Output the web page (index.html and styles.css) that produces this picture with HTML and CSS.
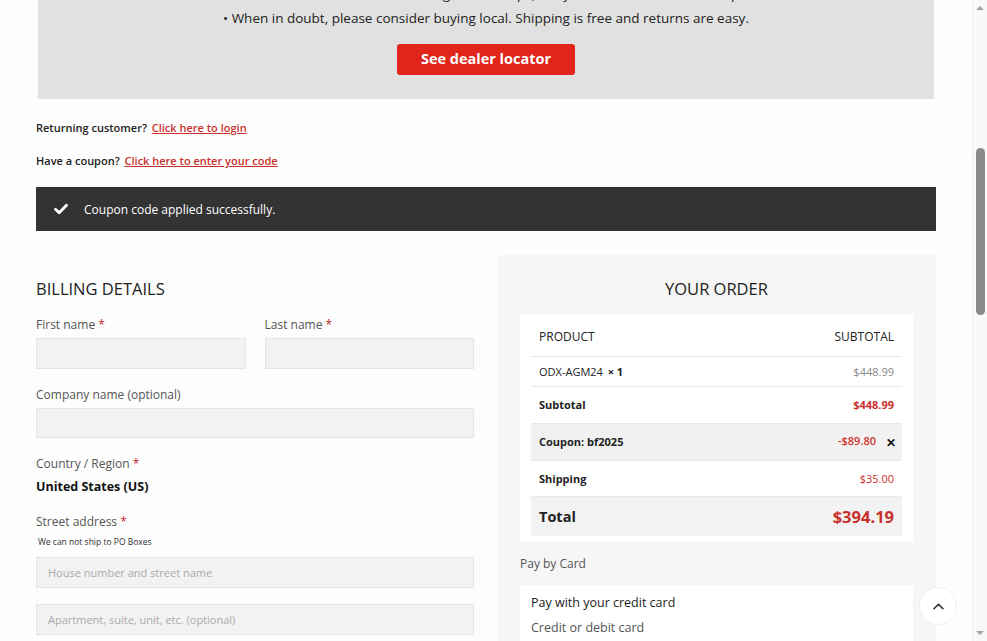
FILE: index.html
```html
<!DOCTYPE html>
<html lang="en">
<head>
<meta charset="utf-8">
<title>Checkout</title>
<link rel="stylesheet" href="styles.css">
</head>
<body>
<div class="viewport">
  <main class="page">
    <section class="dealer-banner">
      <p class="banner-line">• Our batteries are also sold through local shops, ask your nearest dealer for help.</p>
      <p class="banner-line banner-main">• When in doubt, please consider buying local. Shipping is free and returns are easy.</p>
      <a class="dealer-btn" href="#">See dealer locator</a>
    </section>

    <p class="notice">Returning customer? <a href="#">Click here to login</a></p>
    <p class="notice notice-coupon">Have a coupon? <a href="#">Click here to enter your code</a></p>

    <div class="message">
      <svg class="message-icon" viewBox="0 0 14 12" width="14" height="12" aria-hidden="true">
        <path d="M1.5 6.3 L5.2 9.8 L12.5 2.2" fill="none" stroke="#fff" stroke-width="2.8" stroke-linecap="round" stroke-linejoin="round"/>
      </svg>
      <span>Coupon code applied successfully.</span>
    </div>

    <div class="checkout">
      <form class="billing">
        <h3 class="section-title">BILLING DETAILS</h3>
        <div class="field-row">
          <div class="field">
            <label>First name <abbr>*</abbr></label>
            <input class="input" type="text">
          </div>
          <div class="field">
            <label>Last name <abbr>*</abbr></label>
            <input class="input" type="text">
          </div>
        </div>
        <div class="field">
          <label>Company name (optional)</label>
          <input class="input input-short" type="text">
        </div>
        <div class="field">
          <label>Country / Region <abbr>*</abbr></label>
          <strong class="country">United States (US)</strong>
        </div>
        <div class="field">
          <label>Street address <abbr>*</abbr></label>
          <span class="hint">We can not ship to PO Boxes</span>
          <input class="input input-street" type="text" placeholder="House number and street name">
          <input class="input input-apt" type="text" placeholder="Apartment, suite, unit, etc. (optional)">
        </div>
      </form>

      <aside class="order">
        <h3 class="section-title order-title">YOUR ORDER</h3>
        <div class="order-card">
          <table class="order-table">
            <thead>
              <tr class="row-head"><th>PRODUCT</th><th class="num">SUBTOTAL</th></tr>
            </thead>
            <tbody>
              <tr class="row-item"><td>ODX-AGM24 <strong class="qty">× 1</strong></td><td class="num muted">$448.99</td></tr>
            </tbody>
            <tfoot>
              <tr class="row-sub"><th>Subtotal</th><td class="num red">$448.99</td></tr>
              <tr class="row-coupon"><th>Coupon: bf2025</th><td class="num"><span class="red-light">-$89.80</span><span class="remove">✕</span></td></tr>
              <tr class="row-ship"><th>Shipping</th><td class="num red red-normal">$35.00</td></tr>
              <tr class="row-total"><th>Total</th><td class="num red">$394.19</td></tr>
            </tfoot>
          </table>
        </div>
        <p class="pay-title">Pay by Card</p>
        <div class="pay-card">
          <p class="pay-head">Pay with your credit card</p>
          <p class="pay-sub">Credit or debit card</p>
        </div>
      </aside>
    </div>
  </main>

  <div class="scrollbar" aria-hidden="true">
    <span class="scroll-arrow up"></span>
    <div class="scroll-track"><span class="scroll-thumb"></span></div>
    <span class="scroll-arrow down"></span>
  </div>
</div>

<a class="to-top" href="#" aria-label="Back to top">
  <svg viewBox="0 0 14 10" width="13" height="9" aria-hidden="true">
    <path d="M2 7.5 L7 2.5 L12 7.5" fill="none" stroke="#333" stroke-width="1.8" stroke-linecap="round" stroke-linejoin="round"/>
  </svg>
</a>
</body>
</html>
```

FILE: styles.css
```css
* { box-sizing: border-box; }

html, body {
  margin: 0;
  height: 641px;
  overflow: hidden;
}

body {
  font-family: "Open Sans", "Liberation Sans", sans-serif;
  color: #222;
  background: #fdfdfd;
}

p { margin: 0; }

.viewport {
  display: flex;
  height: 641px;
}

.page {
  flex: 1;
  padding: 0 36px;
  min-width: 0;
}

/* dealer banner */
.dealer-banner {
  margin: -17px 2px 0;
  background: #e1e1e1;
  text-align: center;
  padding-bottom: 24px;
}
.banner-line {
  font-size: 13.5px;
  line-height: 22px;
  color: #222;
}
.banner-main { margin-top: 2px; }
.dealer-btn {
  display: inline-block;
  margin-top: 15px;
  width: 178px;
  height: 31px;
  line-height: 30px;
  background: #e1251b;
  color: #fff;
  border-radius: 3px;
  font-weight: 700;
  font-size: 14.5px;
  text-decoration: none;
}

/* notices */
.notice {
  margin-top: 19px;
  font-size: 11px;
  line-height: 20px;
  font-weight: 600;
  color: #222;
}
.notice a {
  color: #c9302c;
  margin-left: 2px;
}
.notice-coupon { margin-top: 13px; }

.message {
  margin-top: 16px;
  height: 44px;
  background: #333;
  color: #fff;
  display: flex;
  align-items: center;
  padding-left: 18px;
  font-size: 12px;
}
.message-icon { margin-right: 16px; }

/* two columns */
.checkout {
  margin-top: 24px;
  display: grid;
  grid-template-columns: 1fr 1fr;
  column-gap: 24px;
  align-items: start;
}

.section-title {
  margin: 0;
  font-weight: 400;
  font-size: 16.5px;
  line-height: 24px;
  color: #222;
}

.billing { padding-top: 22px; }

.field-row {
  display: grid;
  grid-template-columns: 1fr 1fr;
  column-gap: 19px;
}
.field {
  display: flex;
  flex-direction: column;
}
.billing > .field { margin-top: 17px; }
.field-row .field { margin-top: 15px; }

.field label {
  font-size: 12px;
  line-height: 18px;
  color: #555;
}
.field abbr {
  color: #c0282d;
  text-decoration: none;
}

.input {
  margin-top: 4px;
  height: 31px;
  border: 1px solid #e4e4e4;
  background: #f2f2f2;
  font-family: inherit;
  font-size: 11px;
  padding: 0 11px;
  color: #222;
  outline: none;
}
.input::placeholder { color: #aaa; }
.input-short { height: 30px; }

.country {
  margin-top: 5px;
  font-size: 12.5px;
  line-height: 18px;
  font-weight: 700;
  color: #111;
}

.hint {
  margin-top: 5px;
  padding-left: 2px;
  font-size: 8.5px;
  line-height: 12px;
  color: #333;
}
.input-street { margin-top: 9px; }
.input-apt { margin-top: 16px; }

/* order column */
.order {
  background: #f6f6f6;
  padding: 22px 23px 0 22px;
  min-height: 400px;
}
.order-title { text-align: center; }

.order-card {
  margin-top: 13px;
  background: #fff;
  padding: 0 11px 6px;
}
.order-table {
  width: 100%;
  border-collapse: collapse;
  font-size: 11px;
  color: #222;
}
.order-table th,
.order-table td {
  text-align: left;
  padding: 0 8px;
  font-weight: 400;
}
.order-table .num { text-align: right; }

.order-table .row-head th {
  height: 42px;
  padding-top: 4px;
  font-size: 12px;
  color: #222;
}
.row-head { border-bottom: 1px solid #e8e8e8; }
.row-item td { height: 30px; border-bottom: 1px solid #e8e8e8; }
.qty { font-weight: 700; margin-left: 2px; }
.order-table .muted { color: #888; }

.order-table tfoot th { font-weight: 700; }
.row-sub th, .row-sub td { height: 37px; }
.row-coupon th, .row-coupon td { height: 37px; background: #f1f1f1; border-top: 1px solid #e9e9e9; }
.row-ship th, .row-ship td { height: 36px; border-top: 1px solid #e9e9e9; }
.row-total th, .row-total td { height: 40px; background: #f2f2f2; border-top: 1px solid #e9e9e9; }
.order-table .row-total th { font-size: 14.5px; }
.order-table .row-total td { font-size: 16.5px; }

.order-table .red { color: #c9302c; font-weight: 700; }
.order-table .red-normal { font-weight: 400; }
.red-light { color: #d0312d; font-weight: 600; }
.remove {
  display: inline-block;
  margin-left: 10px;
  margin-right: -2px;
  font-weight: 700;
  font-size: 12px;
  color: #111;
  vertical-align: -2px;
}

.pay-title {
  margin-top: 13px;
  font-size: 12px;
  line-height: 18px;
  color: #555;
}
.pay-card {
  margin-top: 12px;
  background: #fff;
  padding: 9px 11px 40px;
}
.pay-head {
  font-size: 12.5px;
  line-height: 18px;
  color: #222;
}
.pay-sub {
  margin-top: 7px;
  font-size: 12.5px;
  line-height: 18px;
  color: #555;
}

/* window scrollbar */
.scrollbar {
  width: 15px;
  flex: none;
  background: #f8f8f8;
  border-left: 1px solid #efefef;
  display: flex;
  flex-direction: column;
  align-items: center;
}
.scroll-arrow {
  width: 0;
  height: 0;
  border-left: 4px solid transparent;
  border-right: 4px solid transparent;
}
.scroll-arrow.up { border-bottom: 4px solid #a3a3a3; margin-top: 6px; }
.scroll-arrow.down { border-top: 4px solid #a3a3a3; margin-bottom: 6px; }
.scroll-track {
  flex: 1;
  width: 100%;
  display: flex;
  justify-content: center;
}
.scroll-thumb {
  margin-top: 138px;
  width: 9px;
  height: 167px;
  border-radius: 5px;
  background: #8a8a8a;
}

/* back-to-top button floats over the page */
.to-top {
  position: fixed;
  left: 919px;
  top: 587px;
  width: 38px;
  height: 38px;
  border-radius: 50%;
  background: #fff;
  border: 1px solid #eeeeee;
  display: flex;
  align-items: center;
  justify-content: center;
}
```
